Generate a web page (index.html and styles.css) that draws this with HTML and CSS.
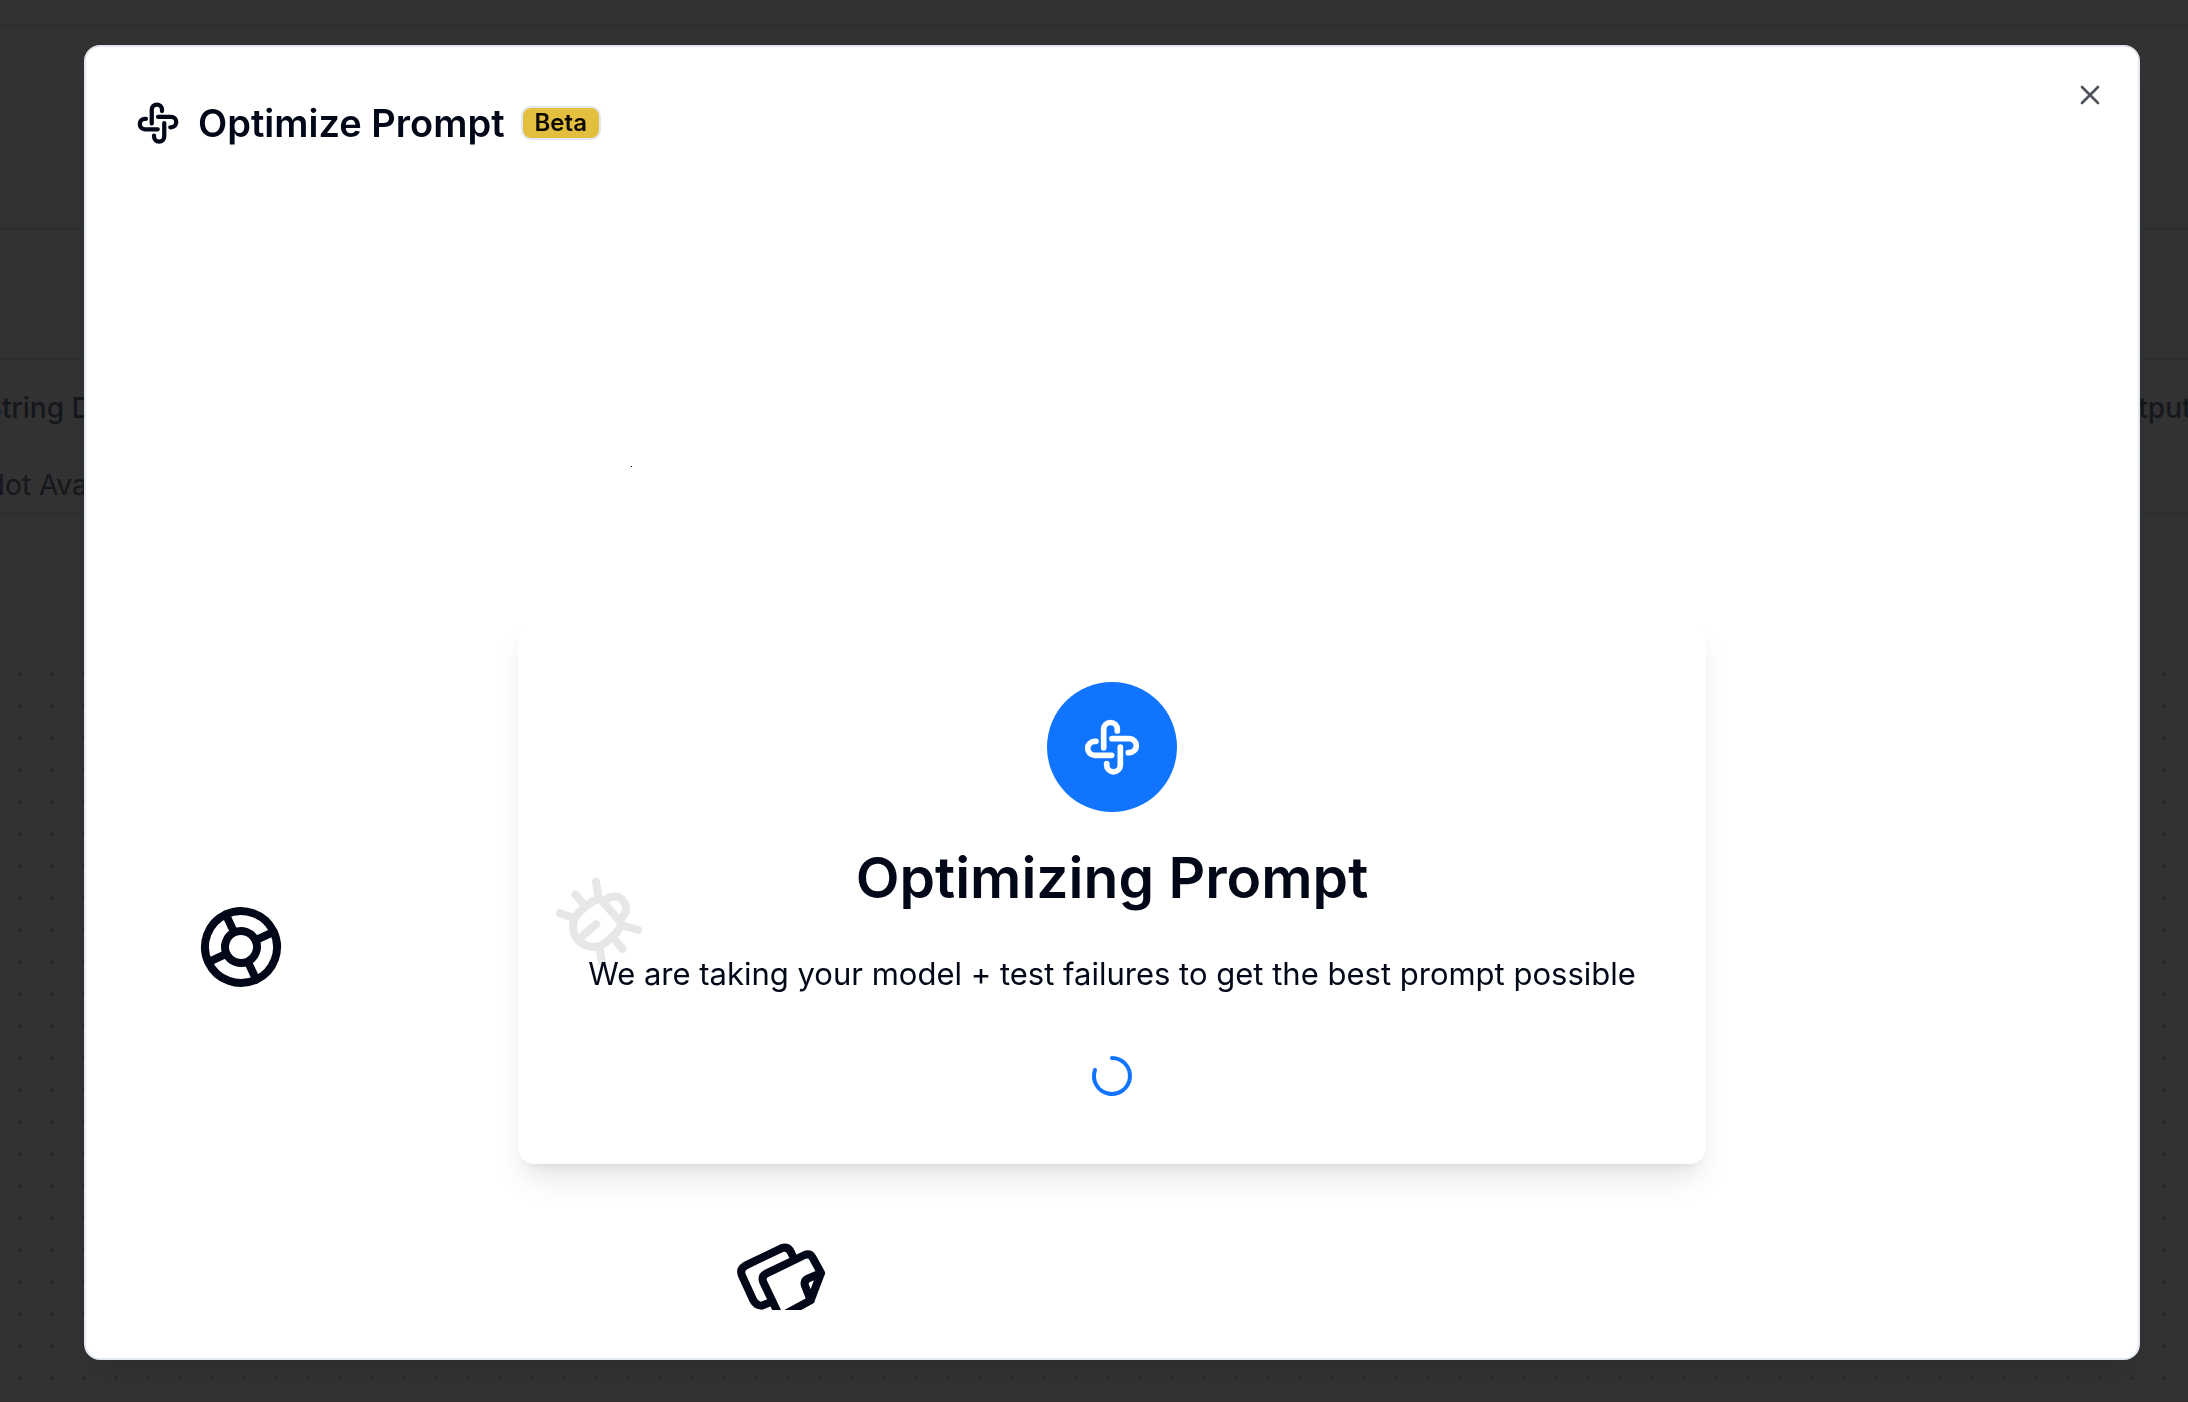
FILE: index.html
```html
<!DOCTYPE html>
<html lang="en">
<head>
<meta charset="utf-8">
<title>Optimize Prompt</title>
<link rel="stylesheet" href="styles.css">
</head>
<body>
<svg class="defs" aria-hidden="true">
  <symbol id="knot" viewBox="180 166 192 192">
    <path d="M251 264V209a20.500 20.500 0 0 1 41 0v5M276 237H328a21 21 0 0 1 0 42h-3M275 287H224a21 21 0 0 1 0-42h4M301 262V316a20.500 20.500 0 0 1-41 0v-4"/>
  </symbol>
</svg>
<main class="page" aria-hidden="true">
  <div class="topbar"></div>
  <div class="toolbar"></div>
  <div class="summary"></div>
  <table class="results">
    <thead><tr><th>String Description</th><th class="last">Output</th></tr></thead>
    <tbody><tr><td>Not Available</td><td class="last"></td></tr></tbody>
  </table>
  <div class="spacer"></div>
  <div class="canvas"></div>
</main>
<div class="overlay">
  <section class="modal" role="dialog" aria-modal="true" aria-labelledby="modal-title">
    <header class="modal-header">
      <svg class="title-icon" aria-hidden="true"><use href="#knot"/></svg>
      <h1 class="modal-title" id="modal-title">Optimize Prompt</h1>
      <span class="badge">Beta</span>
    </header>
    <button class="close" type="button" aria-label="Close">
      <svg viewBox="0 0 24 24"><path d="M18 6 6 18M6 6l12 12"/></svg>
    </button>
    <div class="stage">
      <svg class="floating buoy" viewBox="0 0 24 24" aria-hidden="true">
        <circle cx="12" cy="12" r="4"/><circle cx="12" cy="12" r="9"/>
        <path d="M15 15l3.350 3.350M9 15l-3.350 3.350M5.650 5.650L9 9M18.350 5.650L15 9"/>
      </svg>
      <svg class="floating notes" viewBox="60 50 300 300" aria-hidden="true">
        <path d="M248 106L243 96Q234 76 214 84L106 136Q88 146 96 166L130 240Q138 256 156 256L178 247"/>
        <path d="M205 280L160 186Q153 168 168 160L284 104Q300 98 308 112L333 158L302 240L228 280Q212 290 205 280ZM333 158L295 174Q280 181 285 196L302 240"/>
      </svg>
      <span class="floating spark"></span>
      <div class="card">
        <span class="disc"><svg aria-hidden="true"><use href="#knot"/></svg></span>
        <h2 class="card-title">Optimizing Prompt</h2>
        <p class="card-text">We are taking your model + test failures to get the best prompt possible</p>
        <svg class="spinner" viewBox="0 0 24 24" role="img" aria-label="Loading"><path d="M12 3a9 9 0 1 1-8.500 6"/></svg>
        <svg class="floating bug" viewBox="0 0 24 24" aria-hidden="true">
          <path d="M9 9V8a3 3 0 0 1 6 0v1M8 9h8a6 6 0 0 1 1 3v3a5 5 0 0 1-10 0v-3a6 6 0 0 1 1-3M3 13h4M17 13h4M12 20v-6M4 19l3.350-2M20 19l-3.350-2M4 7l3.750 2.400M20 7l-3.750 2.400"/>
        </svg>
      </div>
    </div>
  </section>
</div>
</body>
</html>
```
FILE: styles.css
```css
* { box-sizing: border-box; }
body {
  margin: 0;
  height: 100vh;
  overflow: hidden;
  background: #fafafa;
  color: #020817;
  font-family: Inter, "Liberation Sans", sans-serif;
}
svg {
  fill: none;
  stroke: currentColor;
  stroke-width: 2;
  stroke-linecap: round;
  stroke-linejoin: round;
}
.defs { position: absolute; width: 0; height: 0; }
#knot { stroke-width: 17px; }

.page {
  display: flex;
  flex-direction: column;
  height: 100vh;
  margin-left: -16px;
  color: #64748b;
}
.topbar, .toolbar, .summary { border-bottom: 2px solid #dce6e8; flex: none; }
.topbar { height: 27px; }
.toolbar { height: 203px; }
.summary { height: 130px; }
.results {
  width: 100%;
  border-collapse: collapse;
  table-layout: fixed;
  font-size: 28px;
  line-height: 40px;
  text-align: left;
}
.results th, .results td { padding: 0; border-bottom: 2px solid #dce6e8; }
.results th { height: 96px; font-weight: 500; }
.results td { height: 58px; }
.results .last { width: 88px; }
.spacer { height: 138px; flex: none; border-bottom: 1px solid #f0f0f0; }
.canvas {
  flex: 1;
  background: radial-gradient(circle, #b0b0b0 1px, transparent 2px) 20px 5px / 32px 32px;
  border-bottom: 1px solid #e8d4dc;
}

.overlay {
  position: fixed;
  inset: 0;
  display: grid;
  padding: 45px 48px 42px 84px;
  background: rgba(0, 0, 0, 0.8);
}
.modal {
  position: relative;
  display: flex;
  flex-direction: column;
  padding: 48px;
  border: 2px solid #e2e8f0;
  border-radius: 16px;
  background: #fff;
  box-shadow: 0 20px 30px -6px rgba(0, 0, 0, 0.1);
}
.modal-header { display: flex; align-items: center; gap: 16px; height: 56px; }
.title-icon { width: 48px; height: 48px; }
.modal-title { margin: 0; font-size: 38px; line-height: 56px; font-weight: 600; }
.badge {
  padding: 0 12px;
  border: 2px solid #e2e8f0;
  border-radius: 10px;
  background: #e2bf3f;
  color: #0c0a00;
  font-size: 24px;
  line-height: 30px;
  font-weight: 600;
}
.close {
  position: absolute;
  top: 32px;
  right: 32px;
  width: 32px;
  height: 32px;
  padding: 0;
  border: 0;
  background: none;
  color: #4e525d;
}
.close svg { display: block; width: 32px; height: 32px; }

.stage {
  position: relative;
  flex: 1;
  display: flex;
  align-items: center;
  justify-content: center;
  padding-top: 320px;
  overflow: hidden;
}
.card {
  position: relative;
  display: flex;
  flex-direction: column;
  align-items: center;
  padding: 64px 70px;
  border-radius: 16px;
  background: #fff;
  box-shadow: 0 20px 30px -6px rgba(0, 0, 0, 0.1), 0 8px 12px -8px rgba(0, 0, 0, 0.1);
}
.disc {
  display: grid;
  place-items: center;
  width: 130px;
  height: 130px;
  border-radius: 50%;
  background: #1074ff;
  color: #fff;
}
.disc svg { width: 64px; height: 64px; }
.card-title { margin: 30px 0 34px; font-size: 57px; line-height: 72px; font-weight: 600; z-index: 1; }
.card-text { margin: 0 0 52px; font-size: 31px; line-height: 52px; z-index: 1; white-space: nowrap; }
.spinner { width: 48px; height: 48px; color: #1074ff; }

.floating { position: absolute; }
.buoy { left: 59px; top: 748px; width: 96px; height: 96px; transform: rotate(20deg); }
.notes { left: 596px; top: 1086px; width: 100px; height: 100px; stroke-width: 24; }
.spark { left: 497px; top: 315px; width: 1px; height: 1px; background: #000; }
.bug { left: 36px; top: 253px; width: 96px; height: 96px; color: #e6e7e9; transform: rotate(49deg); }
```
